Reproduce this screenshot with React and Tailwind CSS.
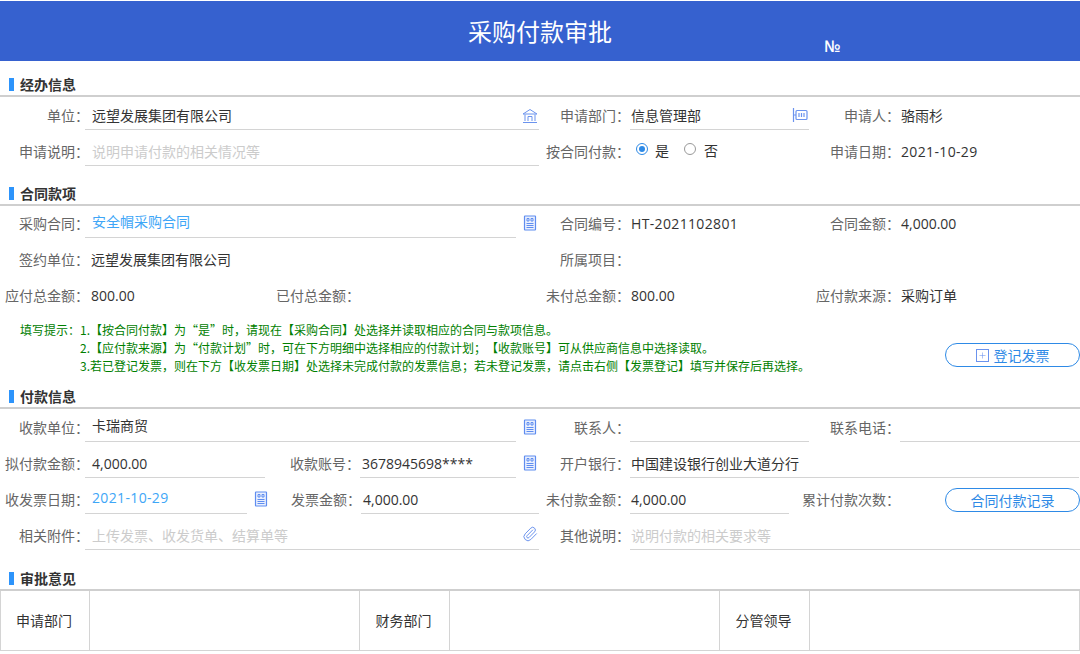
import React from "react";
import { Paperclip, Plus } from "lucide-react";

function BankIcon() {
  return (
    <svg className="w-[16px] h-[16px]" viewBox="0 0 16 16" fill="none" stroke="#6b93ee" strokeWidth="1">
      <path d="M1 6 L8 1.5 L15 6 Z M3 6.5 V13 M13 6.5 V13 M6 13 V8.5 H10 V13 M1 14.5 H15" />
    </svg>
  );
}

function DeptIcon() {
  return (
    <svg className="w-[16px] h-[16px]" viewBox="0 0 16 16" fill="none" stroke="#6b93ee" strokeWidth="1.2">
      <path d="M1.5 1 V15 M1.5 8 H4" />
      <rect x="4" y="3.5" width="11" height="9" rx="1" />
      <path d="M7 6 V10 M9.5 6 V10 M12 6 V10" />
    </svg>
  );
}

function DocIcon() {
  return (
    <svg className="w-[14px] h-[16px]" viewBox="0 0 14 16" fill="none" stroke="#5f8df0" strokeWidth="1.2">
      <rect x="1.5" y="1" width="11" height="14" rx="0.5" fill="#eaf0fe" />
      <path d="M4 3.5 H6 V6 H4 Z M8 3.5 H10 V6 H8 Z M3.5 8.5 H10.5 M3.5 10.5 H10.5 M3.5 12.5 H10.5" strokeWidth="1" />
    </svg>
  );
}

function ClipIcon() {
  return <Paperclip className="w-[16px] h-[16px] text-[#6b93ee]" strokeWidth={1.5} />;
}

function Section({ title }) {
  return (
    <div className="h-[35px] flex flex-col justify-end border-b-2 border-[#cfcfcf]">
      <div className="flex items-center h-[19px] mb-[1px] pl-[9px]">
        <span className="w-[5px] h-[13px] shrink-0 bg-[#2d94fb] mr-[6px]"></span>
        <span className="text-[14px] font-bold text-[#333]">{title}</span>
      </div>
    </div>
  );
}

function Label({ w, children }) {
  return <div className={`${w} shrink-0 text-right text-[#666] whitespace-nowrap`}>{children}：</div>;
}

function Row({ children }) {
  return <div className="h-[36px] flex items-center">{children}</div>;
}

function Box({ w, text, tone = "text-[#333]", line = true, up = false, wide = false, first = false, pad = "pl-[1px]" }) {
  return (
    <div
      className={`${w} shrink-0 h-[28px] mb-[1px] flex items-center whitespace-nowrap ${first ? "-ml-[4px] pl-[7px]" : pad} ${tone} ${line ? "border-b border-[#d4d4d4]" : ""} ${up ? "pb-[3px]" : "pt-[1px]"} ${wide ? "tracking-[0.35px]" : ""}`}
    >
      {text}
    </div>
  );
}

function IconSlot({ w, children }) {
  return <div className={`${w} shrink-0 flex justify-center items-center h-[29px] -mt-[2px]`}>{children}</div>;
}

function Pill({ children }) {
  return (
    <div className="w-[135px] h-[24px] rounded-full border border-[#2e8ae6] text-[#2e8ae6] text-[14px] flex items-center justify-center gap-[5px] font-['Noto_Sans_CJK_SC',sans-serif]">
      {children}
    </div>
  );
}

export default function App() {
  return (
    <div className="w-[1080px] h-[654px] overflow-hidden bg-white text-[14px] leading-[20px] pt-px font-['Open_Sans','Noto_Sans_CJK_SC',sans-serif] [text-spacing-trim:space-all]">
      <div className="relative h-[60px] bg-[#3661cf] text-white flex items-center justify-center">
        <span className="text-[24px] font-['Noto_Sans_CJK_SC',sans-serif]">采购付款审批</span>
        <span className="absolute left-[824px] top-[35px] text-[16px] font-semibold">№</span>
      </div>

      <div className="h-px"></div>
      <Section title="经办信息" />
      <div className="h-px"></div>
      <Row>
        <Label w="w-[89px]">单位</Label>
        <Box w="w-[454px]" text="远望发展集团有限公司" first />
        <div className="w-0 relative">
          <div className="absolute right-[1px] -top-[8px]"><BankIcon /></div>
        </div>
        <Label w="w-[91px]">申请部门</Label>
        <Box w="w-[179px]" text="信息管理部" />
        <div className="w-0 relative">
          <div className="absolute right-[1px] -top-[9px]"><DeptIcon /></div>
        </div>
        <Label w="w-[91px]">申请人</Label>
        <Box w="w-[180px]" text="骆雨杉" line={false} />
      </Row>
      <Row>
        <Label w="w-[89px]">申请说明</Label>
        <Box w="w-[454px]" text="说明申请付款的相关情况等" tone="text-[#ccc]" first />
        <Label w="w-[91px]">按合同付款</Label>
        <div className="w-[179px] shrink-0 flex items-center text-[#333] pl-[6px] -mt-[3px]">
          <span className="w-[12px] h-[12px] rounded-full border border-[#2e8ae6] flex items-center justify-center -mt-[3px]">
            <span className="w-[6px] h-[6px] rounded-full bg-[#2e8ae6]"></span>
          </span>
          <span className="ml-[7px]">是</span>
          <span className="ml-[15px] w-[12px] h-[12px] rounded-full border border-[#999] -mt-[3px]"></span>
          <span className="ml-[8px]">否</span>
        </div>
        <Label w="w-[91px]">申请日期</Label>
        <Box w="w-[180px]" text="2021-10-29" line={false} wide />
      </Row>

      <div className="h-px"></div>
      <Section title="合同款项" />
      <Row>
        <Label w="w-[89px]">采购合同</Label>
        <Box w="w-[431px]" text="安全帽采购合同" tone="text-[#3ea6f7]" up first />
        <IconSlot w="w-[27px]"><DocIcon /></IconSlot>
        <Label w="w-[87px]">合同编号</Label>
        <Box w="w-[179px]" text="HT-2021102801" line={false} wide />
        <Label w="w-[91px]">合同金额</Label>
        <Box w="w-[180px]" text="4,000.00" line={false} />
      </Row>
      <Row>
        <Label w="w-[89px]">签约单位</Label>
        <Box w="w-[451px]" text="远望发展集团有限公司" line={false} pad="pl-[2px]" />
        <Label w="w-[90px]">所属项目</Label>
      </Row>
      <Row>
        <Label w="w-[89px]">应付总金额</Label>
        <Box w="w-[181px]" text="800.00" line={false} pad="pl-[2px]" />
        <Label w="w-[90px]">已付总金额</Label>
        <Box w="w-[180px]" text="" line={false} />
        <Label w="w-[90px]">未付总金额</Label>
        <Box w="w-[180px]" text="800.00" line={false} />
        <Label w="w-[90px]">应付款来源</Label>
        <Box w="w-[180px]" text="采购订单" line={false} />
      </Row>

      <div className="h-[60px] pt-[7px] flex items-start text-[12px] leading-[18px] text-[#008000] pl-[20px] relative font-['Noto_Sans_CJK_SC',sans-serif]">
        <div className="w-[60px] shrink-0 whitespace-nowrap">填写提示：</div>
        <div className="whitespace-nowrap">
          <p>1.【按合同付款】为“是”时，请现在【采购合同】处选择并读取相应的合同与款项信息。</p>
          <p>2.【应付款来源】为“付款计划”时，可在下方明细中选择相应的付款计划；【收款账号】可从供应商信息中选择读取。</p>
          <p>3.若已登记发票，则在下方【收发票日期】处选择未完成付款的发票信息；若未登记发票，请点击右侧【发票登记】填写并保存后再选择。</p>
        </div>
        <div className="absolute left-[945px] top-[29px]">
          <Pill>
            <span className="w-[13px] h-[13px] border border-[#6b93ee] flex items-center justify-center">
              <Plus className="w-[9px] h-[9px] text-[#6b93ee]" strokeWidth={1.5} />
            </span>
            <span>登记发票</span>
          </Pill>
        </div>
      </div>

      <Section title="付款信息" />
      <div className="h-px"></div>
      <Row>
        <Label w="w-[89px]">收款单位</Label>
        <Box w="w-[431px]" text="卡瑞商贸" up first />
        <IconSlot w="w-[27px]"><DocIcon /></IconSlot>
        <Label w="w-[87px]">联系人</Label>
        <Box w="w-[179px]" text="" />
        <Label w="w-[91px]">联系电话</Label>
        <Box w="w-[180px]" text="" />
      </Row>
      <Row>
        <Label w="w-[89px]">拟付款金额</Label>
        <Box w="w-[180px]" text="4,000.00" first />
        <Label w="w-[95px]">收款账号</Label>
        <Box w="w-[156px]" text="3678945698****" pad="pl-[2px]" />
        <IconSlot w="w-[27px]"><DocIcon /></IconSlot>
        <Label w="w-[87px]">开户银行</Label>
        <Box w="w-[449px]" text="中国建设银行创业大道分行" />
      </Row>
      <Row>
        <Label w="w-[89px]">收发票日期</Label>
        <Box w="w-[162px]" text="2021-10-29" tone="text-[#3ea6f7]" up wide first />
        <IconSlot w="w-[27px]"><DocIcon /></IconSlot>
        <Label w="w-[87px]">发票金额</Label>
        <Box w="w-[178px]" text="4,000.00" pad="pl-[2px]" />
        <Label w="w-[91px]">未付款金额</Label>
        <Box w="w-[159px]" text="4,000.00" />
        <Label w="w-[111px]">累计付款次数</Label>
        <div className="ml-[45px]"><Pill>合同付款记录</Pill></div>
      </Row>
      <Row>
        <Label w="w-[89px]">相关附件</Label>
        <Box w="w-[454px]" text="上传发票、收发货单、结算单等" tone="text-[#ccc]" first />
        <div className="w-0 relative">
          <div className="absolute right-[1px] -top-[10px]"><ClipIcon /></div>
        </div>
        <Label w="w-[91px]">其他说明</Label>
        <Box w="w-[450px]" text="说明付款的相关要求等" tone="text-[#ccc]" />
      </Row>

      <div className="h-[2px]"></div>
      <Section title="审批意见" />
      <div className="h-[60px] flex border-b border-x border-[#d4d4d4] text-[#333]">
        <div className="w-[89px] pr-[2px] flex items-center justify-center border-r border-[#d4d4d4]">申请部门</div>
        <div className="w-[270px] border-r border-[#d4d4d4]"></div>
        <div className="w-[90px] pr-[2px] flex items-center justify-center border-r border-[#d4d4d4]">财务部门</div>
        <div className="w-[270px] border-r border-[#d4d4d4]"></div>
        <div className="w-[90px] pr-[2px] flex items-center justify-center border-r border-[#d4d4d4]">分管领导</div>
        <div className="flex-1"></div>
      </div>
    </div>
  );
}
